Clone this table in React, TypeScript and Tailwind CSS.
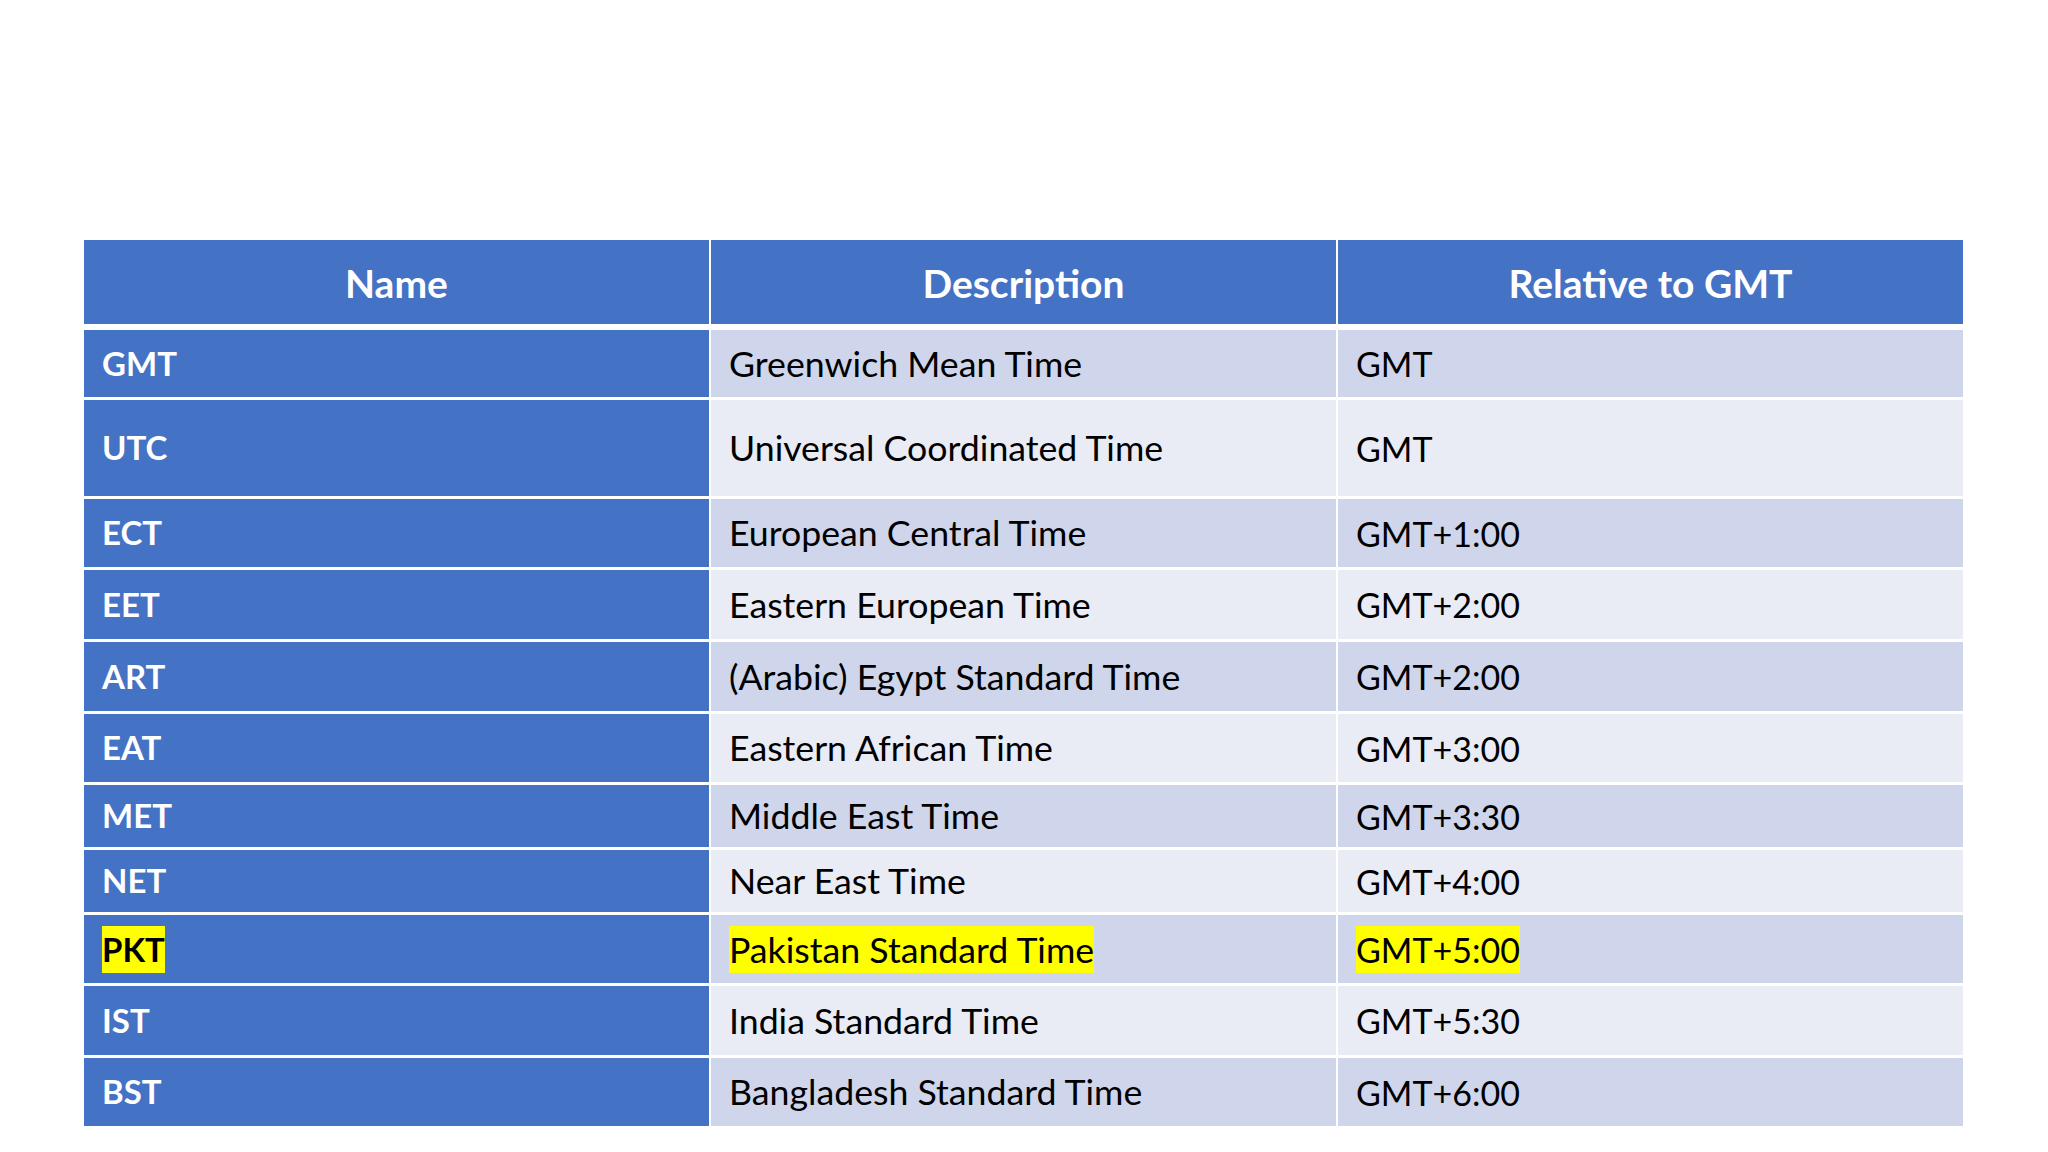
import React from "react";

type Row = { name: string; desc: string; rel: string; h: string; hl?: boolean };

const rows: Row[] = [
  { name: "GMT", desc: "Greenwich Mean Time", rel: "GMT", h: "h-[67px]" },
  { name: "UTC", desc: "Universal Coordinated Time", rel: "GMT", h: "h-[96px]" },
  { name: "ECT", desc: "European Central Time", rel: "GMT+1:00", h: "h-[68px]" },
  { name: "EET", desc: "Eastern European Time", rel: "GMT+2:00", h: "h-[69px]" },
  { name: "ART", desc: "(Arabic) Egypt Standard Time", rel: "GMT+2:00", h: "h-[69px]" },
  { name: "EAT", desc: "Eastern African Time", rel: "GMT+3:00", h: "h-[68px]" },
  { name: "MET", desc: "Middle East Time", rel: "GMT+3:30", h: "h-[62px]" },
  { name: "NET", desc: "Near East Time", rel: "GMT+4:00", h: "h-[62px]" },
  { name: "PKT", desc: "Pakistan Standard Time", rel: "GMT+5:00", h: "h-[68px]", hl: true },
  { name: "IST", desc: "India Standard Time", rel: "GMT+5:30", h: "h-[69px]" },
  { name: "BST", desc: "Bangladesh Standard Time", rel: "GMT+6:00", h: "h-[68px]" },
];

export default function App() {
  return (
    <div className="w-[2048px] h-[1152px] bg-white font-['Lato',sans-serif] overflow-hidden pt-[240px]">
      <div className="pl-[84px] flex flex-col gap-y-[3px] w-[1963px]">
        <div className="grid grid-cols-[625px_625px_625px] gap-x-[2px] h-[84px] mb-[3px]">
          {["Name", "Description", "Relative to GMT"].map((t) => (
            <div key={t} className="bg-[#4472C4] flex items-center justify-center text-white font-bold text-[39px] pt-[2px]">
              {t}
            </div>
          ))}
        </div>
        {rows.map((r, i) => {
          const bg = i % 2 === 0 ? "bg-[#CFD5EA]" : "bg-[#E9EBF5]";
          return (
            <div key={r.name} className={`grid grid-cols-[625px_625px_625px] gap-x-[2px] ${r.h}`}>
              <div className="bg-[#4472C4] flex items-center pl-[18px] font-bold text-[33px]">
                <span className={r.hl ? "inline-block bg-[#FFFF00] text-black leading-[47px]" : "text-white"}>{r.name}</span>
              </div>
              <div className={`${bg} flex items-center pl-[18px] text-[35.7px] text-black`}>
                <span className={r.hl ? "inline-block bg-[#FFFF00] leading-[47px]" : ""}>{r.desc}</span>
              </div>
              <div className={`${bg} flex items-center pl-[18px] text-[34px] text-black`}>
                <span className={r.hl ? "inline-block bg-[#FFFF00] leading-[47px]" : ""}>{r.rel}</span>
              </div>
            </div>
          );
        })}
      </div>
    </div>
  );
}
